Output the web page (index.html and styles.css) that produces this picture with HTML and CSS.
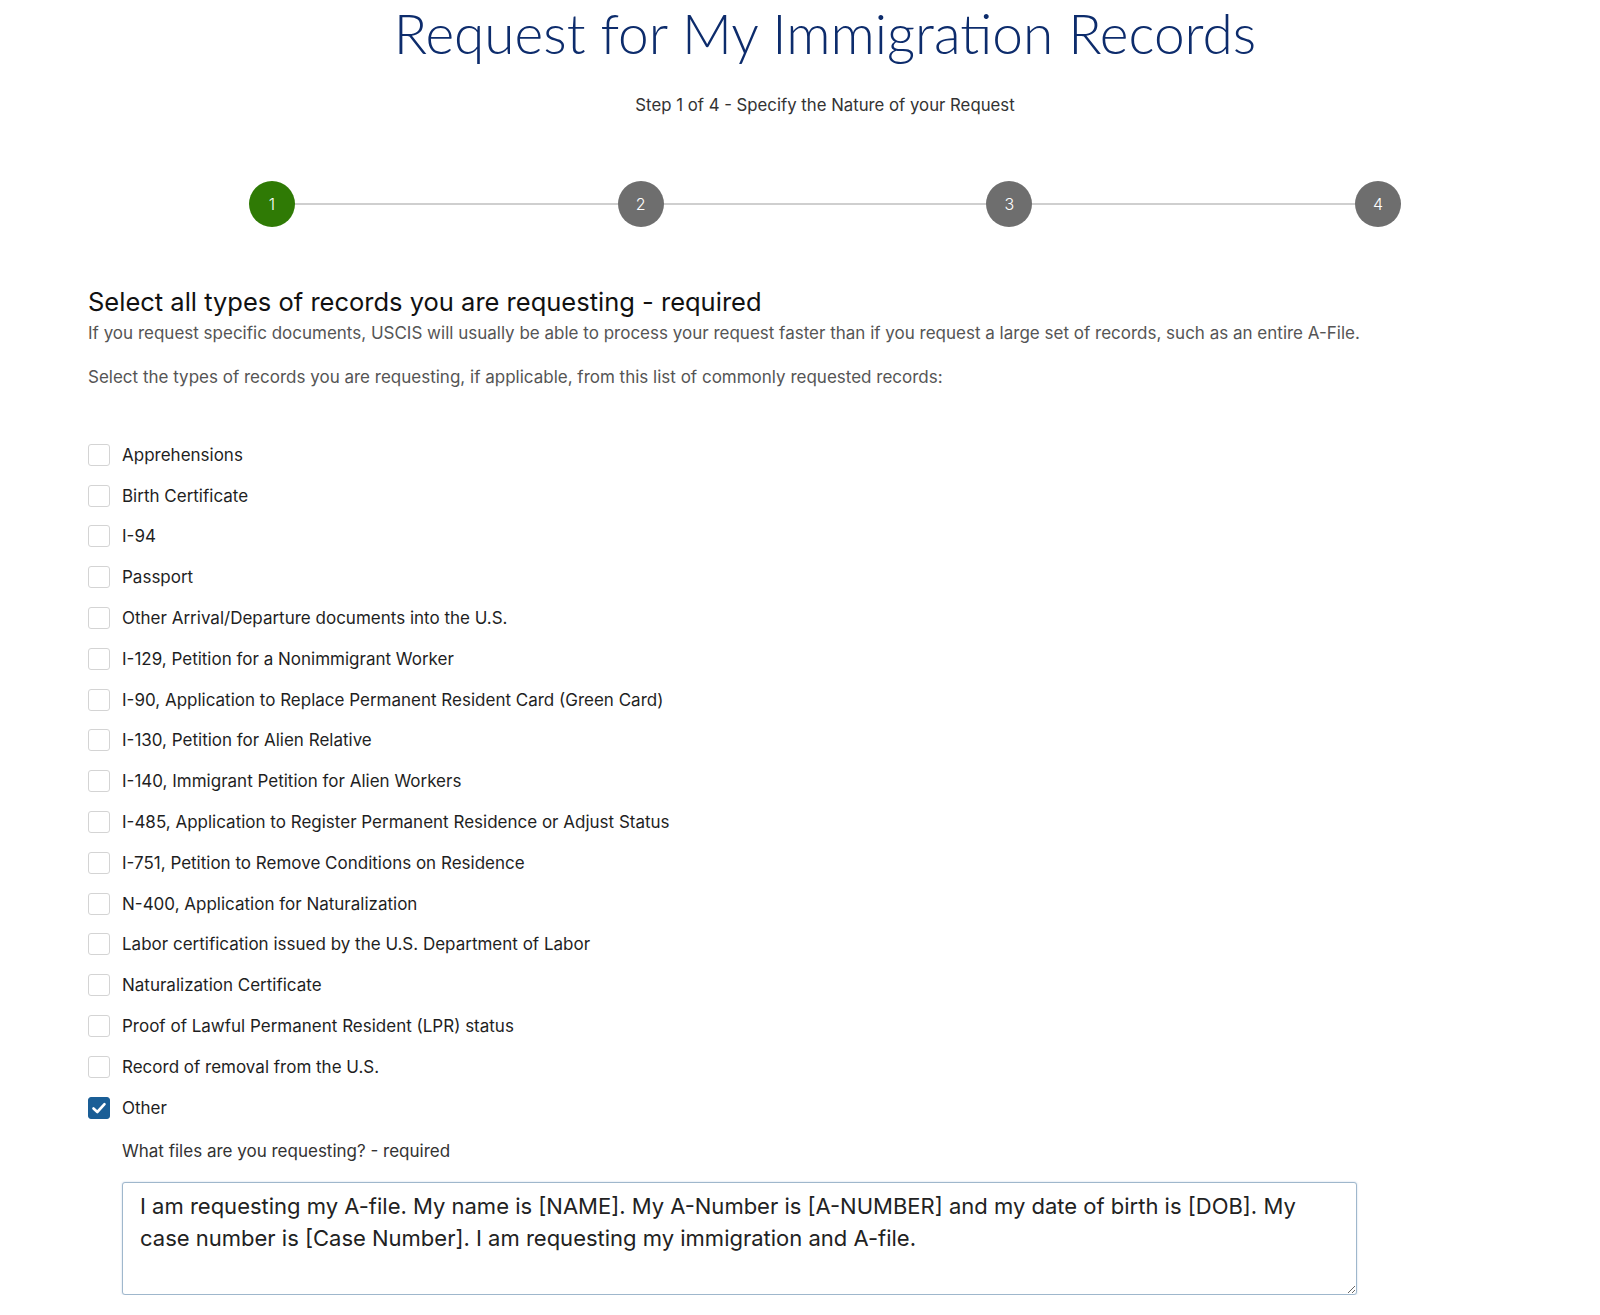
FILE: index.html
```html
<!DOCTYPE html>
<html lang="en">
<head>
    <meta charset="UTF-8">
    <meta name="viewport" content="width=device-width, initial-scale=1.0">
    <title>Request for My Immigration Records</title>
    <link rel="stylesheet" href="styles.css">
</head>
<body>
    <main class="page">
        <h1 class="title">Request for My Immigration Records</h1>
        <p class="step-text">Step 1 of 4 - Specify the Nature of your Request</p>

        <div class="stepper">
            <span class="step active">1</span>
            <span class="step-line"></span>
            <span class="step">2</span>
            <span class="step-line"></span>
            <span class="step">3</span>
            <span class="step-line"></span>
            <span class="step">4</span>
        </div>

        <section class="records">
            <h2>Select all types of records you are requesting - required</h2>
            <p class="hint">If you request specific documents, USCIS will usually be able to process your request faster than if you request a large set of records, such as an entire A-File.</p>
            <p class="hint hint-list">Select the types of records you are requesting, if applicable, from this list of commonly requested records:</p>

            <ul class="record-list">
                <li><span class="box"></span>Apprehensions</li>
                <li><span class="box"></span>Birth Certificate</li>
                <li><span class="box"></span>I-94</li>
                <li><span class="box"></span>Passport</li>
                <li><span class="box"></span>Other Arrival/Departure documents into the U.S.</li>
                <li><span class="box"></span>I-129, Petition for a Nonimmigrant Worker</li>
                <li><span class="box"></span>I-90, Application to Replace Permanent Resident Card (Green Card)</li>
                <li><span class="box"></span>I-130, Petition for Alien Relative</li>
                <li><span class="box"></span>I-140, Immigrant Petition for Alien Workers</li>
                <li><span class="box"></span>I-485, Application to Register Permanent Residence or Adjust Status</li>
                <li><span class="box"></span>I-751, Petition to Remove Conditions on Residence</li>
                <li><span class="box"></span>N-400, Application for Naturalization</li>
                <li><span class="box"></span>Labor certification issued by the U.S. Department of Labor</li>
                <li><span class="box"></span>Naturalization Certificate</li>
                <li><span class="box"></span>Proof of Lawful Permanent Resident (LPR) status</li>
                <li><span class="box"></span>Record of removal from the U.S.</li>
                <li>
                    <span class="box checked">
                        <svg width="16" height="16" viewBox="0 0 16 16"><path d="M2.5 8.5 L6.3 12 L13.5 4.2" fill="none" stroke="#fff" stroke-width="2.6" stroke-linecap="round" stroke-linejoin="round"/></svg>
                    </span>Other
                </li>
            </ul>

            <div class="other-files">
                <label class="other-label" for="files">What files are you requesting? - required</label>
                <textarea id="files" class="other-text">I am requesting my A-file. My name is [NAME]. My A-Number is [A-NUMBER] and my date of birth is [DOB]. My case number is [Case Number]. I am requesting my immigration and A-file.</textarea>
            </div>
        </section>
    </main>
</body>
</html>
```

FILE: styles.css
```css
body {
    font-family: Inter, "Open Sans", Arial, sans-serif;
    margin: 0;
    padding: 0;
    background-color: #fff;
    color: #222;
}

.page {
    width: 1474px;
    margin-left: 88px;
}

.title {
    margin: 0;
    text-align: center;
    font-family: Lato, "Open Sans", Arial, sans-serif;
    font-size: 55px;
    font-weight: 300;
    line-height: 66px;
    color: #0d2c6c;
}

.step-text {
    margin: 27px 0 0;
    text-align: center;
    font-size: 16.75px;
    line-height: 24px;
    color: #333;
}

/* barre de progression */
.stepper {
    display: flex;
    align-items: center;
    width: 1152px;
    margin: 64px auto 0;
}

.step {
    display: flex;
    align-items: center;
    justify-content: center;
    width: 46px;
    height: 46px;
    border-radius: 50%;
    background-color: #6e6e6e;
    color: #fff;
    font-size: 16px;
    font-weight: 300;
    flex-shrink: 0;
}

.step.active {
    background-color: #2f7a05;
}

.step-line {
    flex: 1;
    height: 2px;
    background-color: #cfcfcf;
}

.records h2 {
    margin: 60px 0 0;
    font-size: 25.5px;
    font-weight: 400;
    line-height: 30px;
    color: #111;
}

.hint {
    margin: 5px 0 0;
    font-size: 17px;
    line-height: 22px;
    color: #555;
}

.hint-list {
    margin-top: 22px;
}

.record-list {
    list-style-type: none;
    margin: 46.5px 0 0;
    padding: 0;
}

.record-list li {
    display: flex;
    align-items: center;
    height: 40.8px;
    font-size: 17px;
    color: #1f1f1f;
}

.box {
    display: flex;
    align-items: center;
    justify-content: center;
    box-sizing: border-box;
    width: 22px;
    height: 22px;
    margin-right: 12px;
    border: 1px solid #d4d4d4;
    border-radius: 3px;
    background-color: #fff;
}

.box.checked {
    border-color: #1a5e96;
    background-color: #1a5e96;
}

.other-files {
    padding-left: 34px;
}

.other-label {
    display: block;
    margin-top: 12px;
    font-size: 17px;
    line-height: 22px;
    color: #333;
}

.other-text {
    display: block;
    box-sizing: border-box;
    width: 1235px;
    height: 113px;
    margin-top: 20px;
    padding: 8px 17px;
    border: 1px solid #9fb7cc;
    border-radius: 3px;
    box-shadow: 0 0 2px rgba(80, 130, 180, 0.35);
    font-family: Inter, "Open Sans", Arial, sans-serif;
    font-size: 22px;
    line-height: 31.5px;
    color: #222;
    resize: vertical;
}
```
